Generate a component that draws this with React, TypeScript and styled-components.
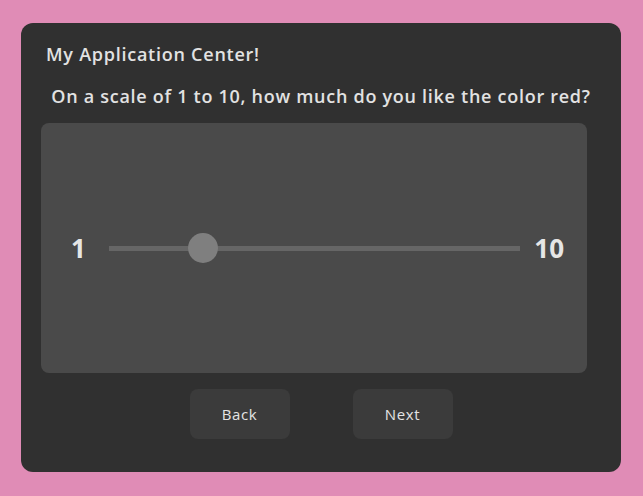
import React, { useState } from "react";
import styled, { createGlobalStyle } from "styled-components";

const GlobalStyle = createGlobalStyle`
  html, body {
    margin: 0;
    padding: 0;
    background: #e08cb6;
  }
  body {
    font-family: "Open Sans", "Noto Sans", sans-serif;
  }
`;

const App: React.FC = () => {
  const [value] = useState<number>(3.07);
  const min = 1;
  const max = 10;
  const pct = (value - min) / (max - min);

  return (
    <>
      <GlobalStyle />
      <StPage>
        <StCard>
          <StTitle>My Application Center!</StTitle>
          <StQuestion>
            On a scale of 1 to 10, how much do you like the color red?
          </StQuestion>
          <StPanel>
            <StEndLabel $before={30} $after={23}>
              {min}
            </StEndLabel>
            <StTrack>
              <StThumb style={{ left: `${pct * 100}%` }} />
            </StTrack>
            <StEndLabel $before={14} $after={23}>
              {max}
            </StEndLabel>
          </StPanel>
          <StButtonRow>
            <StButton>Back</StButton>
            <StButton>Next</StButton>
          </StButtonRow>
        </StCard>
      </StPage>
    </>
  );
};

const StPage = styled.div`
  width: 643px;
  height: 496px;
  padding: 23px 22px 24px 21px;
  box-sizing: border-box;
`;

const StCard = styled.div`
  background-color: #303030;
  border-radius: 12px;
  height: 449px;
  box-sizing: border-box;
  padding: 18px 34px 0 20px;
  display: flex;
  flex-direction: column;
`;

const StTitle = styled.h1`
  margin: 0 0 0 5px;
  font-size: 18px;
  line-height: 26px;
  font-weight: 600;
  letter-spacing: 0.75px;
  color: #e2e2e2;
  white-space: nowrap;
`;

const StQuestion = styled.h2`
  margin: 16px -14px 0 0;
  font-size: 18px;
  line-height: 26px;
  font-weight: 600;
  letter-spacing: 0.72px;
  color: #e2e2e2;
  text-align: center;
  white-space: nowrap;
`;

const StPanel = styled.div`
  margin-top: 14px;
  height: 250px;
  background-color: #4a4a4a;
  border-radius: 8px;
  display: flex;
  align-items: center;
`;

const StEndLabel = styled.span<{ $before: number; $after: number }>`
  margin-left: ${(p) => p.$before}px;
  margin-right: ${(p) => p.$after}px;
  font-size: 26px;
  font-weight: 700;
  color: #e6e6e6;
  line-height: 1;
`;

const StTrack = styled.div`
  position: relative;
  flex: 1;
  height: 5px;
  background-color: #666666;
`;

const StThumb = styled.div`
  position: absolute;
  top: 50%;
  width: 30px;
  height: 30px;
  margin: -15px 0 0 -15px;
  border-radius: 50%;
  background-color: #7f7f7f;
`;

const StButtonRow = styled.div`
  display: flex;
  justify-content: center;
  gap: 63px;
  margin: 16px -14px 0 0;
`;

const StButton = styled.button`
  width: 100px;
  height: 50px;
  border: none;
  border-radius: 8px;
  background-color: #3b3b3b;
  color: #e4e4e4;
  font-family: "Open Sans", "Noto Sans", sans-serif;
  font-size: 15px;
  font-weight: 500;
  letter-spacing: 0.6px;
  cursor: pointer;
`;

export default App;
